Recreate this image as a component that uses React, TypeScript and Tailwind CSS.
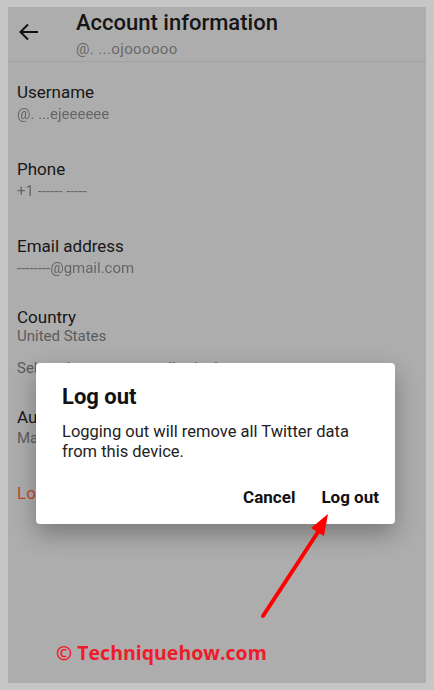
import React from 'react';

const rows = [
  { label: 'Username', value: '@. ...ejeeeeee', pt: 'pt-[19px]' },
  { label: 'Phone', value: '+1 ------ -----', pt: 'pt-[33px]' },
  { label: 'Email address', value: '--------@gmail.com', pt: 'pt-[33px]' },
];

const App = () => {
  return (
    <div
      className="w-[434px] h-[690px] bg-[#c6c6c6] pt-[7px] px-[8px]"
      style={{ fontFamily: 'Roboto, "Liberation Sans", sans-serif' }}
    >
      <div className="relative h-[676px] bg-[#adadad] overflow-hidden">
        {/* Header */}
        <div className="flex h-[55px] border-b border-[#a2a2a2]">
          <div className="w-[68px] pl-[11px] pt-[16px]">
            <svg width="20" height="18" viewBox="0 0 20 18" fill="none" stroke="#111" strokeWidth="2">
              <path d="M19 9H2M9 1.5L1.5 9 9 16.5" />
            </svg>
          </div>
          <div className="pt-[3px]">
            <div className="text-[22px] leading-[26px] font-medium text-[#151515]">Account information</div>
            <div className="mt-[4px] text-[15px] leading-[18px] text-[#6a6a6a] tracking-wide">@. ...ojoooooo</div>
          </div>
        </div>

        {/* Rows */}
        <div className="px-[9px]">
          {rows.map((r) => (
            <div key={r.label} className={r.pt}>
              <div className="text-[17px] leading-[22px] text-[#171717]">{r.label}</div>
              <div className="text-[15px] leading-[22px] text-[#666] blur-[0.3px]">{r.value}</div>
            </div>
          ))}
          <div className="pt-[27px]">
            <div className="text-[17px] leading-[22px] text-[#171717]">Country</div>
            <div className="text-[15px] leading-[16px] text-[#5c5c5c]">United States</div>
            <div className="pt-[15px] text-[15px] leading-[18px] text-[#5c5c5c]">
              Select the country you live in. Learn more
            </div>
          </div>
          <div className="pt-[29px]">
            <div className="text-[17px] leading-[22px] text-[#171717]">Automation</div>
            <div className="text-[15px] leading-[20px] text-[#5c5c5c]">Managed by</div>
          </div>
          <div className="pt-[34px] text-[17px] leading-[22px] text-[#c34a2c]">Log out</div>
        </div>

        {/* Dialog */}
        <div className="absolute left-[28px] top-[356px] w-[359px] h-[161px] bg-white rounded-[4px] shadow-[0_10px_24px_rgba(0,0,0,0.3)] px-[26px] pt-[21px]">
          <div className="text-[22px] leading-[26px] font-bold text-[#111]">Log out</div>
          <div className="mt-[12px] text-[16.5px] leading-[20px] text-[#222]">
            Logging out will remove all Twitter data from this device.
          </div>
          <div className="flex justify-end gap-[26px] mt-[25px] -mr-[10px] text-[17px] leading-[20px] font-bold text-[#111]">
            <span>Cancel</span>
            <span>Log out</span>
          </div>
        </div>

        {/* Arrow annotation */}
        <svg className="absolute left-0 top-0" width="418" height="676" viewBox="0 0 418 676">
          <line x1="255" y1="609" x2="312" y2="522" stroke="#ff0000" strokeWidth="4" strokeLinecap="round" />
          <polygon points="320,507 303,521 316,529" fill="#ff0000" />
        </svg>

        {/* Watermark */}
        <div
          className="absolute left-[48px] top-[633px] text-[19.5px] leading-[26px] font-bold text-[#ec1c2a]"
          style={{ fontFamily: '"Open Sans", "Liberation Sans", sans-serif' }}
        >
          © Techniquehow.com
        </div>
      </div>
    </div>
  );
};

export default App;
